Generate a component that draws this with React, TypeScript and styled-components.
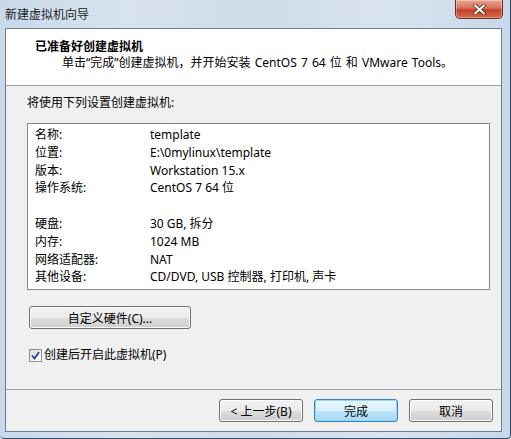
import React from "react";
import styled, { createGlobalStyle } from "styled-components";

const GlobalStyle = createGlobalStyle`
  html, body { margin: 0; padding: 0; }
  body {
    width: 511px; height: 439px; overflow: hidden;
    font-family: "Segoe UI", "Noto Sans", "Noto Sans CJK SC", sans-serif;
    font-size: 12px; color: #000;
  }
`;

const Frame = styled.div`
  box-sizing: border-box;
  width: 511px;
  height: 439px;
  display: flex;
  flex-direction: column;
  padding: 0 8px 6px 5px;
  background: linear-gradient(90deg, #c9d9ea 0%, #d8e3ee 25%, #cfdbe7 50%, #d9e4ef 75%, #c7d8ea 100%);
  border-right: 1px solid #39506a;
  border-bottom: 1px solid #39506a;
  border-radius: 0 0 4px 4px;
`;

const TitleBar = styled.div`
  height: 28px;
  display: flex;
  align-items: flex-start;
  justify-content: space-between;
  margin-right: -1px;
`;

const Title = styled.span`
  font-family: "Noto Sans CJK SC", sans-serif;
  font-size: 12px;
  line-height: 14px;
  color: #1e1e1e;
  margin-top: 7px;
`;

const CloseButton = styled.div`
  width: 46px;
  height: 18px;
  border: 1px solid #6b2a22;
  border-top: none;
  border-radius: 0 0 5px 5px;
  background: linear-gradient(180deg, #e8a493 0%, #d7705b 45%, #c2412a 55%, #d36848 100%);
  display: flex;
  align-items: center;
  justify-content: center;
  box-shadow: inset 0 0 0 1px rgba(255, 255, 255, 0.35);
`;

const Client = styled.div`
  flex: 1;
  display: flex;
  flex-direction: column;
  background: #f0f0f0;
  border: 1px solid #6c7f96;
`;

const Header = styled.div`
  background: #fff;
  border-bottom: 1px solid #a0a0a0;
  padding: 8px 0 0 29px;
  box-sizing: border-box;
  height: 57px;
`;

const HeaderTitle = styled.div`
  font-family: "Noto Sans CJK SC", sans-serif;
  font-weight: bold;
  font-size: 12px;
  line-height: 17px;
`;

const HeaderSub = styled.div`
  font-size: 12px;
  line-height: 17px;
  padding-left: 27px;
  word-spacing: 1px;
`;

const Body = styled.div`
  flex: 1;
  padding: 8px 11px 0 21px;
  display: flex;
  flex-direction: column;
`;

const Intro = styled.div`
  line-height: 17px;
  margin-bottom: 12px;
`;

const SummaryBox = styled.div`
  background: #fff;
  border: 1px solid #828790;
  height: 167px;
  box-sizing: border-box;
  padding: 2px 0 0 7px;
`;

const Row = styled.div<{ $gapBefore?: boolean }>`
  display: grid;
  grid-template-columns: 115px 1fr;
  line-height: 17.8px;
  height: 17.8px;
  margin-top: ${(p) => (p.$gapBefore ? "17.8px" : "0")};
  white-space: nowrap;
`;

const PushButton = styled.button<{ $default?: boolean; $w: number }>`
  box-sizing: border-box;
  width: ${(p) => p.$w}px;
  height: 23px;
  padding: 0;
  font-family: inherit;
  font-size: 12px;
  color: #000;
  border-radius: 3px;
  border: 1px solid ${(p) => (p.$default ? "#3c7fb1" : "#707070")};
  background: ${(p) =>
    p.$default
      ? "linear-gradient(180deg, #eaf6fd 0%, #d9f0fc 50%, #bee6fd 51%, #a7d9f5 100%)"
      : "linear-gradient(180deg, #f2f2f2 0%, #ebebeb 50%, #dddddd 51%, #cfcfcf 100%)"};
  box-shadow: inset 0 0 0 1px ${(p) => (p.$default ? "#94d9fd" : "#fcfcfc")};
`;

const CustomButton = styled(PushButton)`
  margin-top: 16px;
  margin-left: 2px;
`;

const CheckRow = styled.label`
  display: flex;
  align-items: center;
  margin-top: 19px;
  margin-left: 2px;
  line-height: 14px;
`;

const CheckBox = styled.span`
  box-sizing: border-box;
  width: 13px;
  height: 13px;
  border: 1px solid #8e8f8f;
  background: linear-gradient(135deg, #dcdcdc 0%, #ffffff 100%);
  display: inline-flex;
  align-items: center;
  justify-content: center;
  margin-right: 2px;
`;

const Footer = styled.div`
  height: 42px;
  border-top: 1px solid #a0a0a0;
  display: flex;
  justify-content: flex-end;
  align-items: flex-start;
  gap: 11px;
  padding: 9px 8px 0 0;
  box-sizing: border-box;
`;

const rows: { label: string; value: string; gap?: boolean }[] = [
  { label: "名称:", value: "template" },
  { label: "位置:", value: "E:\\0mylinux\\template" },
  { label: "版本:", value: "Workstation 15.x" },
  { label: "操作系统:", value: "CentOS 7 64 位" },
  { label: "硬盘:", value: "30 GB, 拆分", gap: true },
  { label: "内存:", value: "1024 MB" },
  { label: "网络适配器:", value: "NAT" },
  { label: "其他设备:", value: "CD/DVD, USB 控制器, 打印机, 声卡" },
];

export default function App() {
  return (
    <>
      <GlobalStyle />
      <Frame>
        <TitleBar>
          <Title>新建虚拟机向导</Title>
          <CloseButton>
            <svg width="13" height="11" viewBox="0 0 13 11">
              <path
                d="M2 1.5 L11 9.5 M11 1.5 L2 9.5"
                stroke="#4a1a10"
                strokeWidth="3.6"
                strokeLinecap="round"
              />
              <path
                d="M2 1.5 L11 9.5 M11 1.5 L2 9.5"
                stroke="#ffffff"
                strokeWidth="2.2"
                strokeLinecap="round"
              />
            </svg>
          </CloseButton>
        </TitleBar>
        <Client>
          <Header>
            <HeaderTitle>已准备好创建虚拟机</HeaderTitle>
            <HeaderSub>单击“完成”创建虚拟机，并开始安装 CentOS 7 64 位 和 VMware Tools。</HeaderSub>
          </Header>
          <Body>
            <Intro>将使用下列设置创建虚拟机:</Intro>
            <SummaryBox>
              {rows.map((r) => (
                <Row key={r.label} $gapBefore={r.gap}>
                  <span>{r.label}</span>
                  <span>{r.value}</span>
                </Row>
              ))}
            </SummaryBox>
            <CustomButton $w={162}>自定义硬件(C)...</CustomButton>
            <CheckRow>
              <CheckBox>
                <svg width="9" height="9" viewBox="0 0 9 9">
                  <path d="M1 4.5 L3.5 7.5 L8 1" stroke="#21449a" strokeWidth="1.8" fill="none" />
                </svg>
              </CheckBox>
              创建后开启此虚拟机(P)
            </CheckRow>
          </Body>
          <Footer>
            <PushButton $w={84}>&lt; 上一步(B)</PushButton>
            <PushButton $w={84} $default>完成</PushButton>
            <PushButton $w={84}>取消</PushButton>
          </Footer>
        </Client>
      </Frame>
    </>
  );
}
